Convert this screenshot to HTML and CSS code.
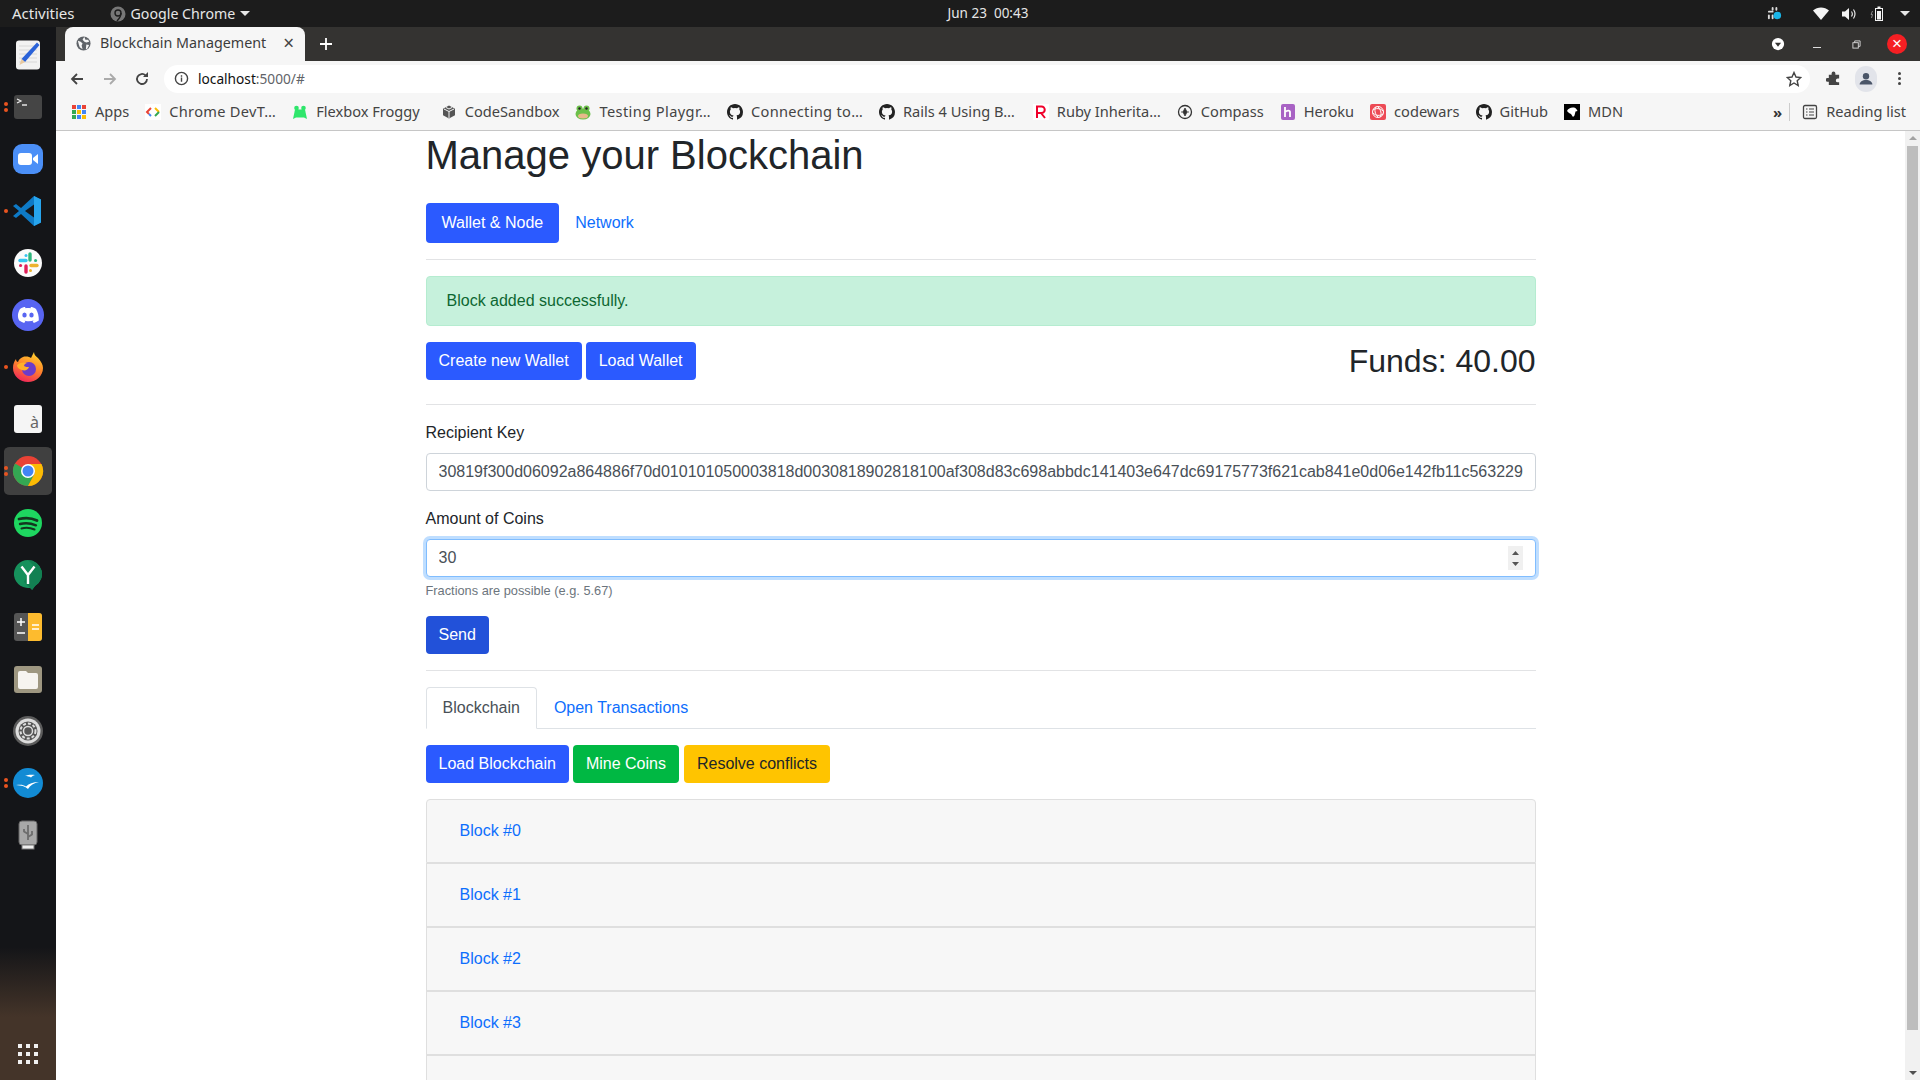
FILE: index.html
```html
<!DOCTYPE html>
<html lang="en">
<head>
<meta charset="utf-8">
<title>Blockchain Management</title>
<link rel="stylesheet" href="styles.css">
</head>
<body>
<div class="desktop">
  <header class="topbar">
    <div class="top-left">
      <span class="activities">Activities</span>
      <svg class="app-ico" viewBox="0 0 16 16"><circle cx="8" cy="8" r="7.500" fill="#777"/><circle cx="8" cy="7" r="3" fill="none" stroke="#1c1c1c" stroke-width="1.400"/><path d="M11 7c0 3-2 6-4 8" fill="none" stroke="#1c1c1c" stroke-width="1.400"/></svg>
      <span class="app-name">Google Chrome</span>
      <span class="caret"></span>
    </div>
    <div class="clock">Jun 23&nbsp;&nbsp;00:43</div>
    <div class="tray">
      <svg class="tray-slack" viewBox="0 0 16 16"><g fill="#ddd"><rect x="1" y="5" width="6" height="2" rx="1"/><rect x="5" y="1" width="2" height="4" rx="1"/><rect x="1" y="9" width="2" height="5" rx="1"/><rect x="5" y="9" width="2" height="5" rx="1"/><rect x="9" y="1" width="2" height="4" rx="1"/></g><circle cx="11" cy="10" r="4" fill="#19b5e8"/></svg>
      <svg class="tray-wifi" viewBox="0 0 16 14"><path d="M0 3.500C4.500-.6 11.500-.6 16 3.500L8 13z" fill="#f4f4f4"/></svg>
      <svg class="tray-vol" viewBox="0 0 16 14"><path d="M1 4.500h3L8 1v12L4 9.500H1z" fill="#f4f4f4"/><path d="M10.500 4.500c1 1.500 1 3.500 0 5M12.500 2.500c2 3 2 6 0 9" fill="none" stroke="#f4f4f4" stroke-width="1.100"/></svg>
      <svg class="tray-bat" viewBox="0 0 16 16"><path d="M2.500 5L1 8.500h1.500L1.500 12" fill="none" stroke="#888" stroke-width="1"/><rect x="5.500" y="2.500" width="7" height="12" fill="#1c1c1c" stroke="#f4f4f4"/><rect x="7" y="5" width="4" height="8.500" fill="#f4f4f4"/><rect x="7.500" y="0.500" width="3" height="2" fill="#f4f4f4"/></svg>
      <span class="caret tray-caret"></span>
    </div>
  </header>
  <div class="workspace">
    <nav class="dock">
      <div class="dock-item"><svg viewBox="0 0 32 32"><rect x="4" y="1.500" width="24" height="29" rx="3" fill="#f2f2f2"/><g stroke="#d8d8d8"><path d="M7 7h18M7 11h18M7 15h18M7 19h18M7 23h18"/></g><path d="M25 3.500l2.500 2.500L13 23l-3.500-3z" fill="#2a62d8"/><path d="M9.500 20L7.500 26l5.500-3z" fill="#e8c9a0"/></svg></div>
      <div class="dock-item"><span class="pips"><i></i><i></i></span><svg viewBox="0 0 32 32"><rect x="2" y="4" width="28" height="24" rx="3" fill="#454545"/><path d="M5 8l4 2-4 2" fill="none" stroke="#eee" stroke-width="1.200"/><path d="M10 14h5" stroke="#eee" stroke-width="1.400"/></svg></div>
      <div class="dock-item"><svg viewBox="0 0 32 32"><rect x="1" y="1" width="30" height="30" rx="9" fill="#4b8ff7"/><rect x="6" y="10" width="14" height="12" rx="3" fill="#fff"/><path d="M21 15l5-4v10l-5-4z" fill="#fff"/></svg></div>
      <div class="dock-item"><span class="pips"><i></i></span><svg viewBox="0 0 32 32"><path d="M22 1l7 3.500v23L22 31 9 19l-5 4-3-2 6-5-6-5 3-2 5 4z" fill="#0e7ac6"/><path d="M22 1l7 3.500v23L22 31z" fill="#27a5ee"/><path d="M22 9.500L13 16l9 6.500z" fill="#15181c"/></svg></div>
      <div class="dock-item"><svg viewBox="0 0 32 32"><circle cx="16" cy="16" r="14" fill="#fbfbfb"/><g stroke-width="3.400" stroke-linecap="round"><path d="M8 13.500h6" stroke="#36c5f0"/><path d="M18 7v6" stroke="#2eb67d"/><path d="M19 18.500h6" stroke="#ecb22e"/><path d="M14 19v6" stroke="#e01e5a"/></g><g stroke-width="3" stroke-linecap="round"><path d="M14 8.500v.1" stroke="#36c5f0"/><path d="M23.500 13.500h.1" stroke="#2eb67d"/><path d="M18.500 23.500v.1" stroke="#ecb22e"/><path d="M8.500 18.500h.1" stroke="#e01e5a"/></g></svg></div>
      <div class="dock-item"><svg viewBox="0 0 32 32"><circle cx="16" cy="16" r="16" fill="#5865f2"/><path d="M8 10c2-1.500 4-2 5-2l.6 1.200c1.600-.3 3.200-.3 4.800 0L19 8c1 0 3 .5 5 2 2 3.500 3 7.500 2.800 11.500-1.800 1.300-3.500 2-5 2.500l-1.200-2c.8-.3 1.300-.5 2-1-3.800 1.800-8.200 1.800-11.200 0 .7.500 1.200.7 2 1l-1.200 2c-1.500-.5-3.200-1.200-5-2.500C5 17.500 6 13.500 8 10z" fill="#fff"/><ellipse cx="12.500" cy="16" rx="2.200" ry="2.500" fill="#5865f2"/><ellipse cx="19.500" cy="16" rx="2.200" ry="2.500" fill="#5865f2"/></svg></div>
      <div class="dock-item"><span class="pips"><i></i></span><svg viewBox="0 0 32 32"><defs><linearGradient id="ff" x1="0.700" y1="0" x2="0.300" y2="1"><stop offset="0" stop-color="#ffd32e"/><stop offset=".45" stop-color="#ff8a2a"/><stop offset="1" stop-color="#f0245a"/></linearGradient></defs><path d="M22 1c0 3 2 4 4 6 3 3 5 7 5 10 0 8-7 14-15 14S1 25 1 17c0-4 1-6 3-9 0 2 1 3 2 3 1-3 3-4 5-5 3-1 7 0 8 1 1-2 2-4 3-6z" fill="url(#ff)"/><circle cx="17" cy="18" r="7" fill="#6b3cc9"/><path d="M5 14c3-3 7-3 10-2-2 .5-3 2-3 3 1.500 1 3 1 5 1-1 3-4 4-7 3-3-1-5-2-5-5z" fill="#ffb02a"/></svg></div>
      <div class="dock-item"><svg viewBox="0 0 32 32"><rect x="2" y="2" width="28" height="28" rx="3" fill="#f5f5f5"/><text x="18" y="25" class="dock-glyph">à</text></svg></div>
      <div class="dock-item dock-active"><span class="pips"><i></i><i></i></span><svg viewBox="0 0 32 32"><circle cx="16" cy="16" r="15" fill="#e94235"/><path d="M16 16L3 8.500A15 15 0 0 0 16 31l7-13z" fill="#34a853"/><path d="M16 9h13.500A15 15 0 0 1 16 31l7-13z" fill="#fbbc04"/><circle cx="16" cy="16" r="7" fill="#fff"/><circle cx="16" cy="16" r="5.500" fill="#4285f4"/></svg></div>
      <div class="dock-item"><svg viewBox="0 0 32 32"><circle cx="16" cy="16" r="14" fill="#1ed760"/><g fill="none" stroke="#14361f" stroke-linecap="round"><path d="M7 12c6-1.500 13-1 18 1.500" stroke-width="2.800"/><path d="M8 17c5-1.300 11-.8 16 1.300" stroke-width="2.400"/><path d="M9.500 21.500c4-1 9-.7 13 1" stroke-width="2"/></g></svg></div>
      <div class="dock-item"><svg viewBox="0 0 32 32"><path d="M16 1a14 14 0 0 1 7 26.100L20 31v-2.600A14 14 0 1 1 16 1z" fill="#16915c"/><path d="M16 1a14 14 0 0 1 7 26.100L20 31l-8-8 9-17z" fill="#128052"/><path d="M9.500 7.500L16 16l6.500-8.500M16 16v9" fill="none" stroke="#fff" stroke-width="2.400"/></svg></div>
      <div class="dock-item"><svg viewBox="0 0 32 32"><rect x="2" y="2" width="28" height="28" rx="3" fill="#555"/><path d="M16 2h11a3 3 0 0 1 3 3v22a3 3 0 0 1-3 3H16z" fill="#fdbb2e"/><path d="M5 11h8M9 7v8M5 22h8M20 14h7M20 18h7" stroke="#fff" stroke-width="1.500"/></svg></div>
      <div class="dock-item"><svg viewBox="0 0 32 32"><rect x="2" y="3" width="28" height="27" rx="3" fill="#9e9781"/><path d="M6 10a2 2 0 0 1 2-2h6l2 2h8a2 2 0 0 1 2 2v12a2 2 0 0 1-2 2H8a2 2 0 0 1-2-2z" fill="#f6f4f0"/></svg></div>
      <div class="dock-item"><svg viewBox="0 0 32 32"><circle cx="16" cy="16" r="15" fill="#5c5c5c"/><circle cx="16" cy="16" r="12.500" fill="#ddd"/><circle cx="16" cy="16" r="9.500" fill="#555"/><circle cx="16" cy="16" r="7.500" fill="none" stroke="#ddd" stroke-width="2" stroke-dasharray="3 2"/><circle cx="16" cy="16" r="4.500" fill="#555" stroke="#ddd" stroke-width="1.500"/></svg></div>
      <div class="dock-item"><span class="pips"><i></i><i></i></span><svg viewBox="0 0 32 32"><circle cx="16" cy="16" r="15" fill="#128bd4"/><path d="M13 9c3-1.500 7-1.500 10-1-2 .5-3 1.500-4 2.500-1.500-1-4-1.500-6-1.500z" fill="#fff"/><path d="M4 18c5-.5 7-.5 10 1.500 3-3 7-4.500 13-4.500-5 1-9 3.500-11 7-3-3-7-3.500-12-4z" fill="#fff"/></svg></div>
      <div class="dock-item"><svg viewBox="0 0 32 32"><rect x="7" y="2" width="18" height="24" rx="3" fill="#a8a8a8" stroke="#666"/><rect x="10" y="26" width="12" height="4" fill="#eee" stroke="#777"/><path d="M16 6v15M16 15l-4-2.500V10M16 18l4-2.500V12" fill="none" stroke="#6d6d6d" stroke-width="1.800"/></svg></div>
      <div class="dock-grid"><i></i><i></i><i></i><i></i><i></i><i></i><i></i><i></i><i></i></div>
    </nav>
    <div class="browser">
      <div class="tabstrip">
        <div class="tab">
          <svg class="tab-ico" viewBox="0 0 16 16"><circle cx="8" cy="8" r="7.500" fill="#5f6368"/><path d="M2 5l3 1 2 2-1 2 1 4-3-2-1-3zM9 1l1 3 3 0 1 2-3 1-2-1-2-2 1-2zM11 9l3 .5-2 4-1.500 1z" fill="#f6f6f6"/></svg>
          <span class="tab-title">Blockchain Management</span>
          <span class="tab-close">×</span>
        </div>
        <svg class="newtab" viewBox="0 0 14 14"><path d="M7 1v12M1 7h12" stroke="#fff" stroke-width="1.800"/></svg>
        <div class="strip-right">
          <svg class="win-drop" viewBox="0 0 16 16"><circle cx="8" cy="8" r="7" fill="#fff"/><path d="M4.500 6.500h7L8 11z" fill="#343331"/></svg>
          <span class="win-min"></span>
          <svg class="win-max" viewBox="0 0 10 10"><rect x="1" y="3" width="6" height="6" fill="none" stroke="#ddd"/><path d="M3 3V1h6v6H7" fill="none" stroke="#ddd"/></svg>
          <span class="win-close">×</span>
        </div>
      </div>
      <div class="toolbar">
        <svg class="tb-ico" viewBox="0 0 16 16"><path d="M14 8H3M8 3L3 8l5 5" fill="none" stroke="#444" stroke-width="1.800"/></svg>
        <svg class="tb-ico tb-fwd" viewBox="0 0 16 16"><path d="M2 8h11M8 3l5 5-5 5" fill="none" stroke="#aaa" stroke-width="1.800"/></svg>
        <svg class="tb-ico tb-reload" viewBox="0 0 16 16"><path d="M13 8a5 5 0 1 1-1.500-3.600" fill="none" stroke="#444" stroke-width="1.800"/><path d="M14 1v5H9z" fill="#444"/></svg>
        <div class="omnibox">
          <svg class="info" viewBox="0 0 16 16"><circle cx="8" cy="8" r="6.500" fill="none" stroke="#444" stroke-width="1.500"/><path d="M8 7v4.500M8 4.500v1.500" stroke="#444" stroke-width="1.500"/></svg>
          <span class="url"><b>localhost</b>:5000/#</span>
          <svg class="star" viewBox="0 0 16 16"><path d="M8 1.500l2 4.500 4.800.5-3.600 3.200 1 4.800L8 12l-4.200 2.500 1-4.800L1.200 6.500 6 6z" fill="none" stroke="#444" stroke-width="1.400"/></svg>
        </div>
        <svg class="ext" viewBox="0 0 16 16"><path d="M6 2.500a2 2 0 0 1 4 0V4h4v4h-1.500a2 2 0 0 0 0 4H14v3H3v-3.500H1.500a2 2 0 0 1 0-4H3V4h3z" fill="#444"/></svg>
        <span class="profile"><svg viewBox="0 0 22 22"><circle cx="11" cy="8" r="3.500" fill="#4a5568"/><path d="M4 17c0-3 3-5 7-5s7 2 7 5z" fill="#4a5568"/></svg></span>
        <span class="kebab"><i></i><i></i><i></i></span>
      </div>
      <div class="bookmarks">
        <div class="bm"><svg class="bm-ico" viewBox="0 0 16 16"><rect x="1" y="1" width="4" height="4" fill="#ea4335"/><rect x="6" y="1" width="4" height="4" fill="#4285f4"/><rect x="11" y="1" width="4" height="4" fill="#ea4335"/><rect x="1" y="6" width="4" height="4" fill="#34a853"/><rect x="6" y="6" width="4" height="4" fill="#fbbc04"/><rect x="11" y="6" width="4" height="4" fill="#4285f4"/><rect x="1" y="11" width="4" height="4" fill="#34a853"/><rect x="6" y="11" width="4" height="4" fill="#4285f4"/><rect x="11" y="11" width="4" height="4" fill="#fbbc04"/></svg>Apps</div>
        <div class="bm bm-wide"><svg class="bm-ico" viewBox="0 0 16 16"><rect width="16" height="16" fill="#fff"/><path d="M6 4L2 8l2 2" fill="none" stroke="#ea4335" stroke-width="2"/><path d="M4 10l2 2" stroke="#4285f4" stroke-width="2"/><path d="M10 4l4 4" fill="none" stroke="#fbbc04" stroke-width="2"/><path d="M14 8l-4 4" stroke="#34a853" stroke-width="2"/></svg>Chrome DevT…</div>
        <div class="bm bm-gap-large"><svg class="bm-ico" viewBox="0 0 16 16"><path d="M1 15l1.500-7c0-2 1-3 2-3s2 .5 3.500.5S10.500 5 11.500 5s2 1 2 3l1.500 7-3-1.500H4z" fill="#2ee66b"/><circle cx="4.500" cy="4" r="2.300" fill="#2ee66b"/><circle cx="11.500" cy="4" r="2.300" fill="#2ee66b"/></svg>Flexbox Froggy</div>
        <div class="bm"><svg class="bm-ico" viewBox="0 0 16 16"><path d="M8 1.500l6 3.200v6.600l-6 3.200-6-3.200V4.700z" fill="#555"/><path d="M3 5l5 2.500L13 5M8 7.500V14" fill="none" stroke="#f6f6f6"/><path d="M5 3.500l3 1.500 3-1.500" fill="none" stroke="#f6f6f6"/></svg>CodeSandbox</div>
        <div class="bm bm-wider"><svg class="bm-ico" viewBox="0 0 16 16"><ellipse cx="8" cy="10" rx="7.500" ry="5.500" fill="#6cc04a"/><circle cx="4.500" cy="4.500" r="3" fill="#6cc04a"/><circle cx="11.500" cy="4.500" r="3" fill="#6cc04a"/><circle cx="4.500" cy="4.500" r="1.200" fill="#222"/><circle cx="11.500" cy="4.500" r="1.200" fill="#222"/><ellipse cx="8" cy="12" rx="5" ry="2.500" fill="#e8b98a"/></svg>Testing Playgr…</div>
        <div class="bm bm-wide"><svg class="bm-ico"><use href="#gh"/></svg>Connecting to…</div>
        <div class="bm bm-gap-small"><svg class="bm-ico"><use href="#gh"/></svg>Rails 4 Using B…</div>
        <div class="bm"><svg class="bm-ico" viewBox="0 0 16 16"><rect width="16" height="16" fill="#fff"/><path d="M4 14V2.500h4.500a3 3 0 0 1 0 6.500H4M8 9l4 5" fill="none" stroke="#f0002a" stroke-width="2"/></svg>Ruby Inherita…</div>
        <div class="bm"><svg class="bm-ico" viewBox="0 0 16 16"><circle cx="8" cy="8" r="6.500" fill="none" stroke="#333" stroke-width="1.300"/><path d="M8 4l2 4-2 4-2-4zM4 8h8" fill="#333" stroke="#333" stroke-width=".8"/></svg>Compass</div>
        <div class="bm"><svg class="bm-ico" viewBox="0 0 16 16"><rect x="1" width="14" height="16" rx="2" fill="#a862c4"/><path d="M5 3v10M5 8c2-1.500 5-2 5 0v5" fill="none" stroke="#fff" stroke-width="1.800"/></svg>Heroku</div>
        <div class="bm"><svg class="bm-ico" viewBox="0 0 16 16"><rect width="16" height="16" rx="2" fill="#ed4a55"/><g fill="none" stroke="#fff" stroke-width="1"><circle cx="8" cy="8" r="5.500"/><path d="M3 6c3-2 7-2 10 1M13 10c-3 2-7 2-10-1M6 3c-2 3-1 7 2 10M10 13c2-3 1-7-2-10"/></g></svg>codewars</div>
        <div class="bm"><svg class="bm-ico"><use href="#gh"/></svg>GitHub</div>
        <div class="bm"><svg class="bm-ico" viewBox="0 0 16 16"><rect width="16" height="16" fill="#000"/><path d="M3 7c1-2.500 4-4 7-3.500 2 .5 3 2 3.500 3.500l-2 .5-1 4-1.500 1.500L7 10 5 9z" fill="#fff"/></svg>MDN</div>
        <div class="bm-right">
          <span class="more">»</span>
          <span class="bm-sep"></span>
          <div class="bm bm-last"><svg class="bm-ico" viewBox="0 0 16 16"><rect x="1.500" y="1.500" width="13" height="13" rx="1.500" fill="none" stroke="#444" stroke-width="1.300"/><path d="M4 5h1.500M7 5h5M4 8h1.500M7 8h5M4 11h1.500M7 11h5" stroke="#444" stroke-width="1.200"/></svg>Reading list</div>
        </div>
      </div>
      <div class="viewport">
        <main class="page">
          <div class="container">
            <h1 class="title">Manage your Blockchain</h1>
            <ul class="pills">
              <li class="pill pill-active">Wallet &amp; Node</li>
              <li class="pill">Network</li>
            </ul>
            <hr class="rule">
            <div class="alert">Block added successfully.</div>
            <div class="wallet-row">
              <div class="btn-row">
                <button class="btn btn-primary">Create new Wallet</button>
                <button class="btn btn-primary">Load Wallet</button>
              </div>
              <h2 class="funds">Funds: 40.00</h2>
            </div>
            <hr class="rule">
            <form class="form">
              <div class="field">
                <label class="label" for="recipient">Recipient Key</label>
                <input class="control" id="recipient" type="text" value="30819f300d06092a864886f70d010101050003818d0030818902818100af308d83c698abbdc141403e647dc69175773f621cab841e0d06e142fb11c563229a4b7e0c9f31d28e5a6077c41bd90312">
              </div>
              <div class="field">
                <label class="label" for="amount">Amount of Coins</label>
                <input class="control control-focus" id="amount" type="number" value="30">
                <small class="hint">Fractions are possible (e.g. 5.67)</small>
              </div>
              <button class="btn btn-send" type="button">Send</button>
            </form>
            <hr class="rule">
            <ul class="tabs">
              <li class="tab-link tab-link-active">Blockchain</li>
              <li class="tab-link">Open Transactions</li>
            </ul>
            <div class="action-row">
              <button class="btn btn-primary">Load Blockchain</button>
              <button class="btn btn-success">Mine Coins</button>
              <button class="btn btn-warning">Resolve conflicts</button>
            </div>
            <div class="accordion">
              <div class="block-card">Block #0</div>
              <div class="block-card">Block #1</div>
              <div class="block-card">Block #2</div>
              <div class="block-card">Block #3</div>
              <div class="block-card"></div>
            </div>
          </div>
        </main>
        <aside class="scrollbar">
          <span class="sb-up"></span>
          <span class="sb-thumb"></span>
          <span class="sb-down"></span>
        </aside>
      </div>
    </div>
  </div>
</div>
<svg class="sprite" width="0" height="0"><symbol id="gh" viewBox="0 0 16 16"><path fill="#222" d="M8 0C3.580 0 0 3.580 0 8c0 3.540 2.290 6.530 5.470 7.590.4.070.55-.17.55-.38v-1.340c-2.230.48-2.700-1.070-2.700-1.070-.36-.93-.89-1.170-.89-1.170-.73-.5.050-.49.050-.49.800.06 1.230.82 1.230.82.720 1.220 1.870.87 2.330.66.070-.52.280-.87.510-1.070-1.780-.2-3.640-.89-3.640-3.950 0-.87.310-1.590.820-2.150-.08-.2-.36-1.020.08-2.120 0 0 .670-.21 2.200.82a7.600 7.600 0 0 1 4 0c1.530-1.040 2.200-.82 2.200-.82.440 1.100.16 1.920.08 2.120.51.560.82 1.270.82 2.150 0 3.070-1.870 3.750-3.650 3.950.29.250.54.730.54 1.480v2.200c0 .21.150.46.55.38A8 8 0 0 0 16 8c0-4.420-3.580-8-8-8z"/></symbol></svg>
</body>
</html>
```
FILE: styles.css
```css
* { box-sizing: border-box; }
html, body { margin: 0; padding: 0; height: 100%; overflow: hidden; }
body { font-family: "Liberation Sans", Arial, sans-serif; font-size: 16px; line-height: 1.5; color: #212529; }
.sprite { position: absolute; }
.desktop { width: 1920px; height: 1080px; display: flex; flex-direction: column; overflow: hidden; }

/* GNOME top bar */
.topbar { height: 27px; flex: none; background: #1c1c1c; color: #e6e6e6; font-family: "Noto Sans", sans-serif; font-size: 14px; display: grid; grid-template-columns: 1fr auto 1fr; align-items: center; padding: 0 12px; }
.top-left { display: flex; align-items: center; }
.activities { font-size: 15px; margin-right: 35px; }
.app-ico { width: 16px; height: 16px; margin-right: 5px; }
.app-name { font-size: 14.200px; margin-right: 5px; }
.caret { width: 0; height: 0; border-left: 5px solid transparent; border-right: 5px solid transparent; border-top: 5px solid #e6e6e6; }
.clock { font-size: 13.500px; margin-left: 56px; }
.tray { display: flex; align-items: center; justify-content: flex-end; }
.tray-slack { width: 15px; height: 15px; margin-right: 31px; }
.tray-wifi { width: 16px; height: 14px; margin-right: 12px; }
.tray-vol { width: 16px; height: 14px; margin-right: 13px; }
.tray-bat { width: 16px; height: 16px; margin-right: 14px; }
.tray-caret { margin-right: -2px; }

/* Dock */
.workspace { flex: 1; display: flex; min-height: 0; }
.dock { width: 56px; flex: none; display: flex; flex-direction: column; align-items: center; padding-top: 2px; background: linear-gradient(#141518 0, #141518 920px, #443429 990px, #443429 100%); }
.dock-item { position: relative; width: 48px; height: 52px; display: flex; align-items: center; justify-content: center; }
.dock-item svg { width: 32px; height: 32px; }
.dock-active { background: #404040; background-clip: padding-box; border: solid transparent; border-width: 2px 0; border-radius: 6px; }
.dock-glyph { font-family: "Noto Sans", sans-serif; font-size: 16px; fill: #666; }
.pips { position: absolute; left: 0; top: 0; bottom: 0; display: flex; flex-direction: column; justify-content: center; gap: 2px; }
.pips i { width: 4px; height: 4px; border-radius: 50%; background: #e95420; }
.dock-grid { margin-top: auto; margin-bottom: 16px; display: grid; grid-template-columns: repeat(3, 4px); gap: 4px; }
.dock-grid i { width: 4px; height: 4px; background: #f0f0f0; }

/* Browser chrome */
.browser { flex: 1; min-width: 0; display: flex; flex-direction: column; }
.tabstrip { height: 34px; flex: none; background: #343331; display: flex; align-items: flex-end; padding-left: 9px; }
.tab { width: 240px; height: 34px; background: #f6f6f6; border-radius: 8px 8px 0 0; display: flex; align-items: center; padding: 0 11px 2px 11px; color: #3c3c3c; font-family: "Noto Sans", sans-serif; font-size: 14.300px; }
.tab-ico { width: 15px; height: 15px; margin-right: 9px; flex: none; }
.tab-title { flex: 1; white-space: nowrap; }
.tab-close { font-size: 19px; line-height: 1; color: #444; }
.newtab { width: 14px; height: 14px; margin: 0 0 10px 14px; }
.strip-right { margin-left: auto; height: 100%; display: flex; align-items: center; padding-right: 13px; }
.win-drop { width: 14px; height: 14px; margin-right: 28px; }
.win-min { width: 8px; height: 1px; background: #ddd; margin: 6px 31px 0 0; }
.win-max { width: 9px; height: 9px; margin-right: 26px; }
.win-close { width: 20px; height: 20px; border-radius: 50%; background: #f51f23; color: #fff; font-size: 17px; line-height: 19px; text-align: center; }

.toolbar { height: 35px; flex: none; background: #f6f6f6; display: flex; align-items: center; padding-right: 13px; }
.tb-ico { width: 16px; height: 16px; margin-left: 13px; flex: none; }
.tb-fwd { margin-left: 17px; }
.tb-reload { margin-left: 16px; }
.omnibox { margin-left: 14px; width: 1646px; height: 28px; background: #fff; border-radius: 14px; display: flex; align-items: center; padding: 0 8px 0 10px; }
.info { width: 15px; height: 15px; flex: none; }
.url { margin: 1px 0 0 9px; flex: 1; font-family: "Noto Sans", sans-serif; font-size: 13.700px; color: #5f6368; }
.url b { font-weight: 400; color: #111; }
.star { width: 16px; height: 16px; flex: none; }
.ext { width: 15px; height: 15px; margin: 0 -1px 0 16px; flex: none; }
.profile { width: 22px; height: 26px; border-radius: 11px; background: #e2e4ea; margin-left: 15px; display: flex; align-items: center; justify-content: center; flex: none; }
.profile svg { width: 20px; height: 20px; }
.kebab { margin-left: 21px; display: flex; flex-direction: column; gap: 2px; width: 4px; }
.kebab i { width: 3px; height: 3px; border-radius: 50%; background: #444; }

.bookmarks { height: 35px; flex: none; background: #f6f6f6; border-bottom: 1px solid #c6c6c6; display: flex; align-items: center; padding: 0 0 2px 15px; color: #444; font-family: "Noto Sans", sans-serif; font-size: 14.600px; white-space: nowrap; }
.bm { display: flex; align-items: center; gap: 8px; margin-right: 16px; }
.bm-wide { letter-spacing: .3px; }
.bm-wider { letter-spacing: .4px; }
.bm-gap-large { margin-right: 21px; }
.bm-gap-small { margin-right: 18px; }
.bm-ico { width: 16px; height: 16px; flex: none; }
.bm-right { margin-left: auto; display: flex; align-items: center; }
.more { font-size: 15px; font-weight: 700; color: #333; margin-right: 7px; }
.bm-sep { width: 1px; height: 18px; background: #ccc; margin-right: 12px; }
.bm-last { margin-right: 14px; }

/* Page */
.viewport { flex: 1; min-height: 0; display: flex; background: #fff; }
.page { flex: 1; min-width: 0; overflow: hidden; }
.container { width: 1110px; margin: 0 auto; }
.title { margin: 0 0 24px; font-size: 40px; font-weight: 500; line-height: 48px; }
.pills { list-style: none; margin: 0; padding: 0; display: flex; }
.pill { padding: 8px 16px; color: #0d6efd; border-radius: 4px; }
.pill-active { background: #2b5aff; color: #fff; }
.rule { margin: 16px 0; border: 0; border-top: 1px solid #e2e3e5; }
.alert { padding: 12px 20px; border: 1px solid #b5ecd0; border-radius: 4px; background: #c6f1dc; color: #0d6732; margin-bottom: 16px; }
.wallet-row { display: flex; justify-content: space-between; height: 46px; }
.btn-row { display: flex; gap: 4px; height: 38px; }
.btn { font: inherit; height: 38px; padding: 6px 12px; border: 1px solid transparent; border-radius: 4px; color: #fff; }
.btn-primary { background: #2b5aff; }
.btn-send { background: #2251d9; }
.btn-success { background: #00b843; }
.btn-warning { background: #ffc400; color: #212529; }
.funds { margin: 0; font-size: 32px; font-weight: 500; line-height: 38px; }
.field { margin-bottom: 16px; }
.label { display: block; margin-bottom: 8px; }
.control { display: block; width: 100%; height: 38px; padding: 6px 12px; font: inherit; color: #495057; background: #fff; border: 1px solid #ced4da; border-radius: 4px; outline: 0; }
.control-focus { border-color: #80bdff; box-shadow: 0 0 0 3px rgba(0, 123, 255, .25); }
.control::-webkit-inner-spin-button { -webkit-appearance: none; appearance: none; opacity: 1; width: 15px; height: 24px; background: #f0f0f0 url("data:image/svg+xml,%3Csvg xmlns='http://www.w3.org/2000/svg' width='15' height='24'%3E%3Cpath d='M4 9l3.500-4 3.500 4zM4 16l3.500 4 3.500-4z' fill='%23555'/%3E%3C/svg%3E") center no-repeat; }
.hint { display: block; margin-top: 4px; font-size: 12.800px; line-height: 19px; color: #6c757d; }
.tabs { list-style: none; margin: 0 0 16px; padding: 0; display: flex; height: 42px; border-bottom: 1px solid #dee2e6; }
.tab-link { height: 42px; padding: 8px 16px; color: #0d6efd; border: 1px solid transparent; border-radius: 4px 4px 0 0; }
.tab-link-active { background: #fff; color: #495057; border-color: #dee2e6 #dee2e6 #fff; }
.action-row { display: flex; gap: 4px; margin-bottom: 16px; }
.action-row .btn-warning { margin-left: 1px; }
.accordion { display: flex; flex-direction: column; }
.block-card { height: 64px; padding: 19px 33px; background: #f7f7f7; color: #0d6efd; border: 1px solid #dfdfdf; }
.block-card:first-child { border-radius: 4px 4px 0 0; }

.scrollbar { width: 15px; flex: none; position: relative; background: #f1f1f1; display: flex; flex-direction: column; align-items: center; padding: 5px 2px; }
.sb-up { width: 0; height: 0; border-left: 4px solid transparent; border-right: 4px solid transparent; border-bottom: 4px solid #a3a3a3; }
.sb-thumb { width: 11px; height: 884px; margin-top: 6px; background: #bdbdbd; }
.sb-down { width: 0; height: 0; margin-top: auto; border-left: 4px solid transparent; border-right: 4px solid transparent; border-top: 4px solid #505050; }
```
